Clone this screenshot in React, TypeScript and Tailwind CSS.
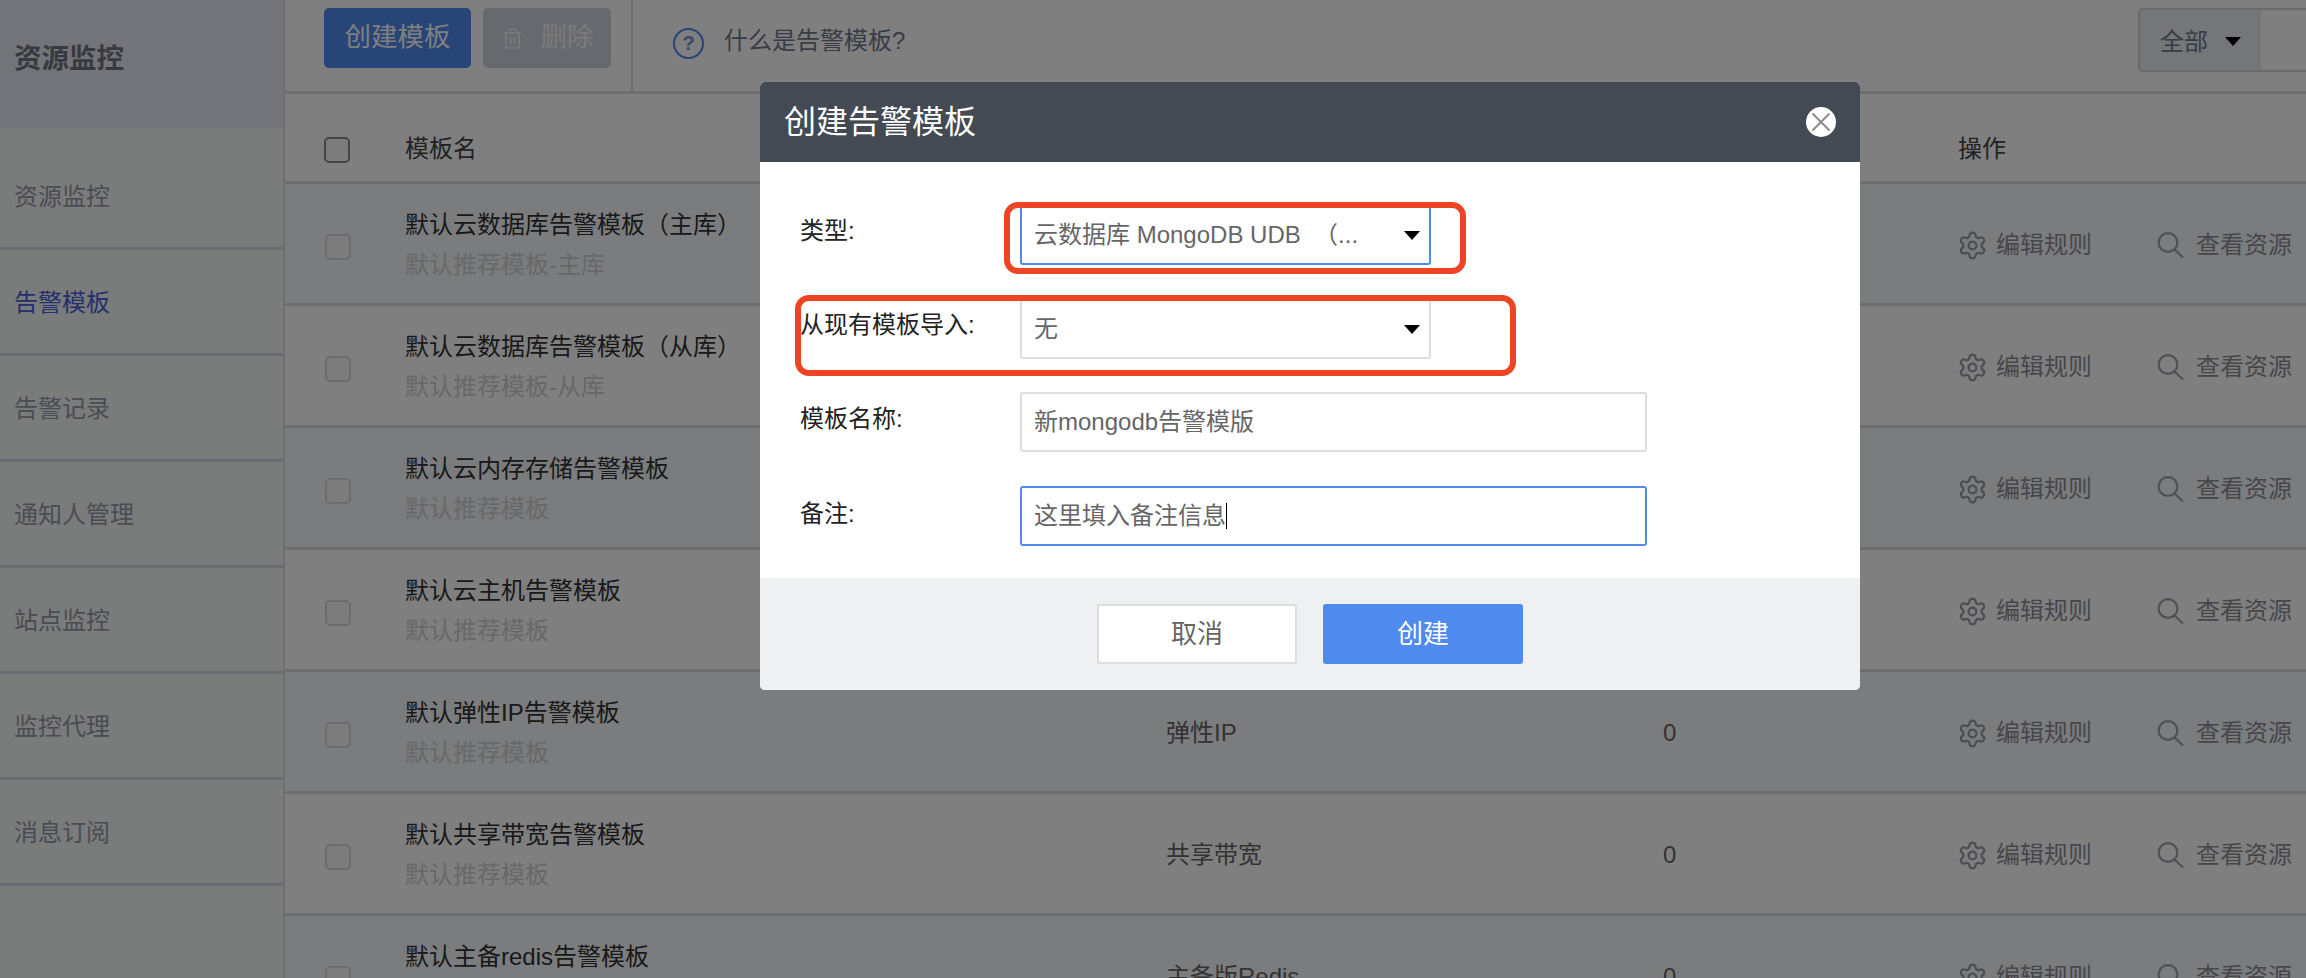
import React from "react";
import { Settings, Trash2, X } from "lucide-react";

const FONT = "font-['Liberation_Sans','Noto_Sans_CJK_SC',sans-serif]";

const NAV = ["资源监控", "告警模板", "告警记录", "通知人管理", "站点监控", "监控代理", "消息订阅"];

const ROWS = [
  { name: "默认云数据库告警模板（主库）", note: "默认推荐模板-主库", type: "云数据库" },
  { name: "默认云数据库告警模板（从库）", note: "默认推荐模板-从库", type: "云数据库" },
  { name: "默认云内存存储告警模板", note: "默认推荐模板", type: "云内存存储" },
  { name: "默认云主机告警模板", note: "默认推荐模板", type: "云主机" },
  { name: "默认弹性IP告警模板", note: "默认推荐模板", type: "弹性IP" },
  { name: "默认共享带宽告警模板", note: "默认推荐模板", type: "共享带宽" },
  { name: "默认主备redis告警模板", note: "默认推荐模板", type: "主备版Redis" },
];

const COLS = "grid grid-cols-[120px_761px_497px_295px_1fr]";

function Caret({ className = "" }: { className?: string }) {
  return (
    <svg width="16" height="9" viewBox="0 0 16 9" className={className}>
      <path d="M0 0h16L8 9z" fill="#000" />
    </svg>
  );
}

function Magnifier() {
  return (
    <svg width="27" height="26" viewBox="0 0 27 26" fill="none" stroke="#a0a3b0" strokeWidth="2.2" className="shrink-0 ml-[65px]">
      <circle cx="11" cy="10.5" r="9.4" />
      <path d="M17.5 17.5L26 25.5" />
    </svg>
  );
}

function Box({ header = false }: { header?: boolean }) {
  return (
    <div
      className={
        header
          ? "w-[26px] h-[26px] rounded-[5px] border-2 border-[#8a8a8a] bg-[#f8f8f8]"
          : "w-[26px] h-[26px] rounded-[5px] border-2 border-[#d8d8dc] bg-[#f8f8fa]"
      }
    />
  );
}

function Sidebar() {
  return (
    <aside className="w-[285px] shrink-0 h-full bg-[#f4f6f7] border-r-2 border-[#dcdde6]">
      <div className="h-[128px] bg-[#e6e8f2] pl-[14px] pt-[44px] text-[27.5px] leading-[30px] font-bold text-[#6f7480]">
        资源监控
      </div>
      <nav className="pt-[16px]">
        {NAV.map((item, i) => (
          <div
            key={item}
            className={
              i === 1
                ? "h-[106px] pl-[14px] pt-[38px] text-[24px] leading-[30px] text-[#4a5fd8] border-b-[3px] border-[#d6d8e4]"
                : "h-[106px] pl-[14px] pt-[38px] text-[24px] leading-[30px] text-[#9498a6] border-b-[3px] border-[#d6d8e4]"
            }
          >
            {item}
          </div>
        ))}
      </nav>
    </aside>
  );
}

function Toolbar() {
  return (
    <div className="h-[94px] shrink-0 flex border-b-[3px] border-[#dcdcdc]">
      <div className="w-[348px] shrink-0 flex items-start gap-3 pl-[39px] pt-2 border-r-2 border-[#dcdcdc] h-full">
        <button className="w-[147px] h-[60px] rounded-[5px] bg-[#4f8aef] text-white text-[26.5px]">创建模板</button>
        <button className="w-[128px] h-[60px] rounded-[5px] bg-[#ced3dd] text-[#f4f4f6] text-[26.5px] flex items-center justify-center gap-[17px]">
          <Trash2 size={23} strokeWidth={1.6} />
          <span>删除</span>
        </button>
      </div>
      <div className="flex items-start pl-10 pt-[26px] text-[24px] leading-[30px] text-[#707888]">
        <div className="w-[31px] h-[31px] rounded-full border-2 border-[#4f8aef] text-[#6f94d0] font-bold text-[20px] leading-[27px] text-center mr-[20px] mt-0.5">
          ?
        </div>
        <span>什么是告警模板?</span>
      </div>
      <div className="ml-auto mt-2 w-[168px] h-[64px] shrink-0 rounded-l-[5px] border-2 border-r-0 border-[#d4d4d8] flex">
        <div className="w-[121px] h-full bg-[#eaecf0] flex items-center pl-[20px] gap-[17px] pt-[3px] text-[24px] text-[#707888]">
          <span>全部</span>
          <Caret />
        </div>
      </div>
    </div>
  );
}

function Table() {
  return (
    <div>
      <div className={`${COLS} h-[90px] pt-[23px] items-center text-[24px] text-[#444] border-b-[3px] border-[#dcdcdc]`}>
        <div className="pl-[39px] pt-px">
          <Box header />
        </div>
        <div>模板名</div>
        <div />
        <div />
        <div>操作</div>
      </div>
      {ROWS.map((row, i) => (
        <div
          key={row.name}
          className={
            i % 2 === 0
              ? `${COLS} h-[122px] items-center border-b-[3px] border-[#dcdcdc] bg-[#f6f8fc]`
              : `${COLS} h-[122px] items-center border-b-[3px] border-[#dcdcdc] bg-white`
          }
        >
          <div className="pl-[40px] pt-[6px]">
            <Box />
          </div>
          <div className="pt-[3px]">
            <div className="text-[24px] leading-[30px] text-[#333]">{row.name}</div>
            <div className="mt-[10px] text-[24px] leading-[30px] text-[#d0d0d0]">{row.note}</div>
          </div>
          <div className="text-[24px] text-[#666] pt-[3px]">{row.type}</div>
          <div className="text-[24px] text-[#666] pt-[3px]">0</div>
          <div className="flex items-center text-[24px] text-[#8e8f96] pt-[3px]">
            <Settings size={31} strokeWidth={1.75} className="shrink-0 text-[#9a9ca6] -ml-px" />
            <span className="ml-2 whitespace-nowrap">编辑规则</span>
            <Magnifier />
            <span className="ml-[12px] whitespace-nowrap">查看资源</span>
          </div>
        </div>
      ))}
    </div>
  );
}

function Field({
  label,
  children,
  className = "",
  labelClass = "pt-[11px]",
}: {
  label: string;
  children: React.ReactNode;
  className?: string;
  labelClass?: string;
}) {
  return (
    <div className={`flex h-[60px] ${className}`}>
      <label className={`w-[260px] shrink-0 pl-[40px] text-[24px] leading-[30px] text-[#222] ${labelClass}`}>{label}</label>
      {children}
    </div>
  );
}

function SelectBox({ value, focus = false }: { value: string; focus?: boolean }) {
  return (
    <div
      className={
        focus
          ? "w-[411px] h-[60px] rounded-[3px] border-2 border-[#4f8aef] bg-white flex items-center justify-between pl-[12px] pr-[9px] text-[24px] text-[#666]"
          : "w-[411px] h-[60px] rounded-[3px] border-2 border-[#dddde1] bg-white flex items-center justify-between pl-[12px] pr-[9px] text-[24px] text-[#666]"
      }
    >
      <span className="whitespace-pre">{value}</span>
      <Caret />
    </div>
  );
}

function Dialog() {
  return (
    <div className="absolute left-[760px] top-[82px] w-[1100px] h-[608px] rounded-[5px] overflow-hidden flex flex-col bg-white">
      <div className="h-[80px] shrink-0 bg-[#434a54] flex items-center justify-between pl-6 pr-6 text-white text-[32px]">
        <span>创建告警模板</span>
        <span className="w-[30px] h-[30px] rounded-full bg-white text-[#8a8a8a] flex items-center justify-center overflow-hidden">
          <X size={32} strokeWidth={1.4} className="shrink-0" />
        </span>
      </div>
      <div className="relative h-[416px] shrink-0 pt-[43px]">
        <Field label="类型:">
          <SelectBox value="云数据库 MongoDB UDB  （..." focus />
        </Field>
        <Field label="从现有模板导入:" className="mt-[34px]">
          <SelectBox value="无" />
        </Field>
        <Field label="模板名称:" className="mt-[33px]" labelClass="pt-[12px]">
          <div className="w-[627px] h-[60px] rounded-[3px] border-2 border-[#dddde1] flex items-center pl-[12px] text-[24px] text-[#666]">
            新mongodb告警模版
          </div>
        </Field>
        <Field label="备注:" className="mt-[34px]" labelClass="pt-[13px]">
          <div className="w-[627px] h-[60px] rounded-[3px] border-2 border-[#4f8aef] flex items-center pl-[12px] text-[24px] text-[#666]">
            这里填入备注信息
            <span className="w-px h-[26px] bg-black" />
          </div>
        </Field>
        <div className="absolute left-[244px] top-[40px] w-[462px] h-[72px] rounded-[14px] border-[6px] border-[#ee4426]" />
        <div className="absolute left-[35px] top-[133px] w-[721px] h-[81px] rounded-[14px] border-[6px] border-[#ee4426]" />
      </div>
      <div className="flex-1 bg-[#eff0f2] flex justify-center gap-[26px] pt-[26px]">
        <button className="w-[200px] h-[60px] rounded-[3px] border-2 border-[#dddde1] bg-white text-[26px] text-[#666]">取消</button>
        <button className="w-[200px] h-[60px] rounded-[3px] bg-[#4f8aef] text-[26px] text-white">创建</button>
      </div>
    </div>
  );
}

export default function App() {
  return (
    <div className={`relative w-[2306px] h-[978px] overflow-hidden flex bg-white ${FONT}`}>
      <Sidebar />
      <main className="flex-1 min-w-0 flex flex-col">
        <Toolbar />
        <Table />
      </main>
      <div className="absolute inset-0 bg-black/50" />
      <Dialog />
    </div>
  );
}
